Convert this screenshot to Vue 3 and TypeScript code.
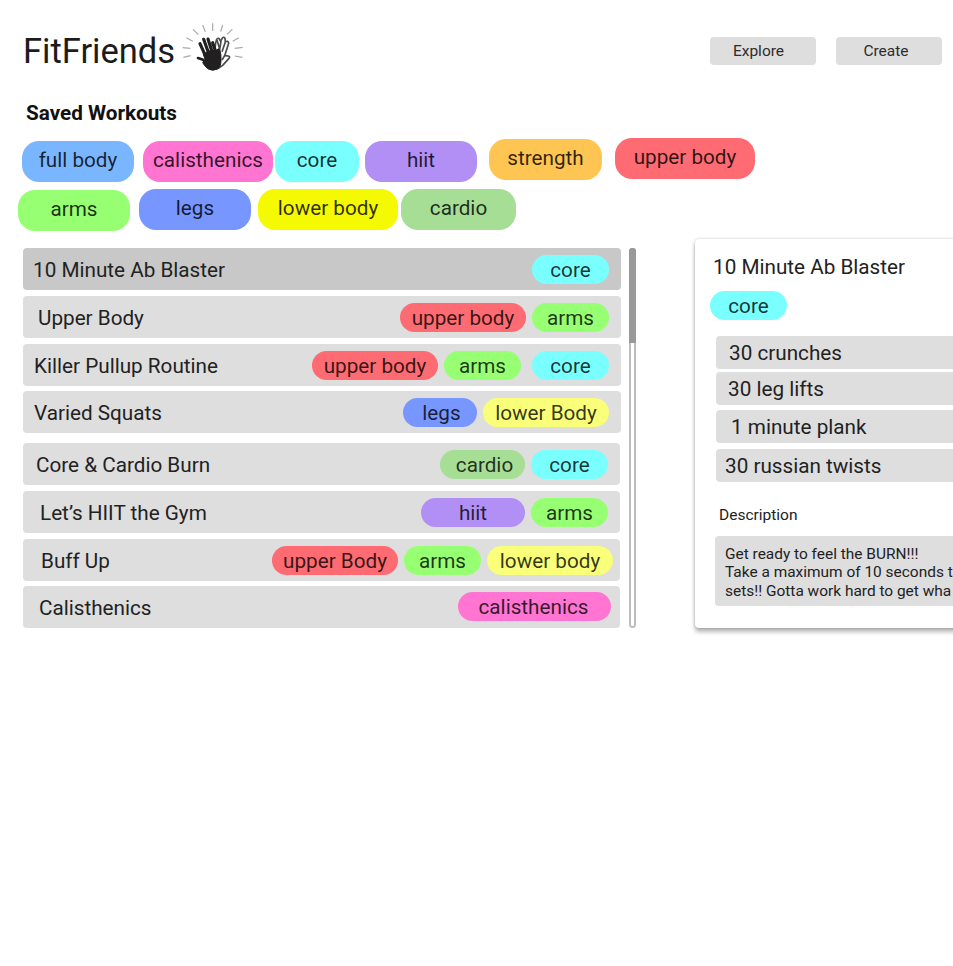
<script setup lang="ts">
interface Tag {
  label: string
  kind: string
}

interface Workout {
  name: string
  tags: Tag[]
}

const filters: Tag[][] = [
  [
    { label: 'full body', kind: 'full' },
    { label: 'calisthenics', kind: 'calisthenics' },
    { label: 'core', kind: 'core' },
    { label: 'hiit', kind: 'hiit' },
    { label: 'strength', kind: 'strength' },
    { label: 'upper body', kind: 'upper' },
  ],
  [
    { label: 'arms', kind: 'arms' },
    { label: 'legs', kind: 'legs' },
    { label: 'lower body', kind: 'lower' },
    { label: 'cardio', kind: 'cardio' },
  ],
]

const workouts: Workout[] = [
  { name: '10 Minute Ab Blaster', tags: [{ label: 'core', kind: 'core' }] },
  {
    name: 'Upper Body',
    tags: [
      { label: 'upper body', kind: 'upper' },
      { label: 'arms', kind: 'arms' },
    ],
  },
  {
    name: 'Killer Pullup Routine',
    tags: [
      { label: 'upper body', kind: 'upper' },
      { label: 'arms', kind: 'arms' },
      { label: 'core', kind: 'core' },
    ],
  },
  {
    name: 'Varied Squats',
    tags: [
      { label: 'legs', kind: 'legs' },
      { label: 'lower Body', kind: 'lower' },
    ],
  },
  {
    name: 'Core & Cardio Burn',
    tags: [
      { label: 'cardio', kind: 'cardio' },
      { label: 'core', kind: 'core' },
    ],
  },
  {
    name: 'Let’s HIIT the Gym',
    tags: [
      { label: 'hiit', kind: 'hiit' },
      { label: 'arms', kind: 'arms' },
    ],
  },
  {
    name: 'Buff Up',
    tags: [
      { label: 'upper Body', kind: 'upper' },
      { label: 'arms', kind: 'arms' },
      { label: 'lower body', kind: 'lower' },
    ],
  },
  { name: 'Calisthenics', tags: [{ label: 'calisthenics', kind: 'calisthenics' }] },
]

const selected = 0
const exercises: string[] = ['30 crunches', '30 leg lifts', '1 minute plank', '30 russian twists']
const description: string[] = [
  'Get ready to feel the BURN!!!',
  'Take a maximum of 10 seconds t',
  'sets!! Gotta work hard to get wha',
]
</script>

<template>
  <div class="page">
    <header class="header">
      <h1 class="brand">FitFriends</h1>
      <svg class="logo" viewBox="0 0 225 195" fill="none">
        <g class="rays">
          <path d="M113 25V48M83 30L91 50M143 30L137 50M54 43L70 59M172 43L156 58M34 68L53 79M192 68L173 79M23 98L46 100M203 97L179 100M25 127L47 122M202 127L179 123" />
        </g>
        <g class="back-hand">
          <path d="M122 84L125 73Q130 67 133 72L137 79L142 69Q147 64 150 70L151 80Q161 76 161 85L149 122L160 123Q167 126 162 130L143 151L130 160L118 120Z" />
          <path d="M126 75L134 102M138 79L134 104M151 81L141 110M149 122L141 135" />
        </g>
        <g class="front-hand">
          <path class="fingers" d="M75 86L91 122M86 73L102 118M99 72L113 116M113 83L124 116" />
          <path class="thumb" d="M69 129L84 134L96 148" />
          <path class="palm" d="M86 117L101 108L124 106Q130 99 134 103Q139 116 138 138Q137 157 128 162Q112 170 98 161Q90 154 83 143L90 136Z" />
        </g>
      </svg>
      <nav class="nav">
        <button class="nav-button">Explore</button>
        <button class="nav-button">Create</button>
      </nav>
    </header>

    <h2 class="heading">Saved Workouts</h2>

    <section class="filters">
      <div v-for="(line, i) in filters" :key="i" class="filter-line">
        <span v-for="tag in line" :key="tag.kind" :class="['chip', tag.kind]">{{ tag.label }}</span>
      </div>
    </section>

    <main class="content">
      <ul class="workouts">
        <li v-for="(w, i) in workouts" :key="w.name" :class="['workout', { selected: i === selected }]">
          <span class="name">{{ w.name }}</span>
          <span v-for="tag in w.tags" :key="tag.kind" :class="['tag', tag.kind]">{{ tag.label }}</span>
        </li>
      </ul>
      <div class="scrollbar"><div class="thumb-bar"></div></div>

      <aside class="card">
        <h3 class="card-title">{{ workouts[selected].name }}</h3>
        <span class="tag core">core</span>
        <ul class="exercises">
          <li v-for="e in exercises" :key="e" class="exercise">{{ e }}</li>
        </ul>
        <h4 class="card-label">Description</h4>
        <div class="description">
          <p v-for="line in description" :key="line">{{ line }}</p>
        </div>
      </aside>
    </main>
  </div>
</template>

<style>
body {
  background: #fff;
}
</style>

<style scoped>
.page {
  box-sizing: border-box;
  width: 953px;
  height: 966px;
  overflow: hidden;
  font-family: Roboto, 'Liberation Sans', sans-serif;
  font-size: 20.7px;
  line-height: 24px;
  color: #222;
  background: #fff;
}
h1, h2, h3, h4, p, ul {
  margin: 0;
  padding: 0;
  font-weight: 400;
}
ul {
  list-style: none;
}
.header {
  display: flex;
  align-items: flex-start;
  height: 101px;
  padding-left: 23px;
}
.brand {
  width: 152px;
  margin-top: 31px;
  font-size: 34.5px;
  line-height: 40px;
  white-space: nowrap;
  color: #1c1c1c;
}
.logo {
  width: 75px;
  height: 65px;
  margin-top: 15px;
}
.rays {
  stroke: #a9a9a9;
  stroke-width: 3.5;
}
.back-hand {
  fill: #fff;
  stroke: #4a4a4a;
  stroke-width: 5;
  stroke-linejoin: round;
}
.front-hand {
  stroke: #211f20;
  stroke-linecap: round;
  stroke-linejoin: round;
}
.fingers {
  stroke-width: 9.5;
}
.thumb {
  stroke-width: 8;
}
.palm {
  fill: #211f20;
  stroke-width: 3;
}
.nav {
  display: flex;
  gap: 20px;
  margin: 37px 11px 0 auto;
}
.nav-button {
  width: 106px;
  height: 28px;
  padding: 0 9px 0 0;
  border: 0;
  border-radius: 4px;
  background: #dedede;
  color: #2c2c2c;
  font: 400 15.5px/27px Roboto, sans-serif;
}
.nav-button:last-child {
  padding-right: 6px;
}
.heading {
  height: 23px;
  padding-left: 26px;
  font-size: 20.7px;
  font-weight: 700;
  color: #111;
}
.filters {
  height: 124px;
}
.filter-line {
  display: flex;
  padding: 17px 0 0 22px;
  height: 32px;
}
.filter-line:last-child {
  padding-left: 18px;
}
.chip {
  flex: none;
  box-sizing: border-box;
  width: 112px;
  height: 41px;
  padding-top: 7px;
  border-radius: 17px;
  text-align: center;
  color: rgba(0, 0, 0, 0.82);
}
.chip.calisthenics { width: 130px; margin-left: 9px; }
.chip.core { width: 84px; margin-left: 2px; }
.chip.hiit { margin-left: 6px; }
.chip.strength { margin: -2px 0 0 12px; width: 113px; }
.chip.upper { margin: -3px 0 0 13px; width: 140px; }
.chip.arms { margin-top: 0; }
.chip.legs { margin: -1px 0 0 9px; }
.chip.lower { margin: -1px 0 0 7px; width: 140px; }
.chip.cardio { margin: -1px 0 0 3px; width: 115px; }

.full { background: #7ab6ff; }
.calisthenics { background: #ff75d1; }
.core { background: #7affff; }
.hiit { background: #b18ff5; }
.strength { background: #ffc552; }
.upper { background: #ff6b72; }
.arms { background: #96ff72; }
.legs { background: #7896ff; }
.lower { background: #f9ff78; }
.chip.lower { background: #f6fa00; }
.cardio { background: #a6de96; }

.content {
  display: flex;
  align-items: flex-start;
  padding-left: 23px;
}
.workouts {
  flex: none;
  width: 598px;
}
.workout {
  display: flex;
  align-items: center;
  box-sizing: border-box;
  height: 42px;
  margin-bottom: 6px;
  padding: 2px 12px 0 10px;
  border-radius: 4px;
  background: #dedede;
}
.workout.selected { background: #c8c8c8; }
.workout:nth-child(2) { padding-left: 15px; }
.workout:nth-child(3) { padding-left: 11px; margin-bottom: 5px; }
.workout:nth-child(4) { padding-left: 11px; margin-bottom: 10px; }
.workout:nth-child(n + 5) { width: 597px; }
.workout:nth-child(5) { padding-left: 13px; }
.workout:nth-child(6) { padding-left: 17px; }
.workout:nth-child(7) { padding: 2px 7px 0 18px; margin-bottom: 5px; }
.workout:nth-child(8) { padding: 2px 9px 0 16px; margin-bottom: 0; }
.name {
  margin-right: auto;
  white-space: nowrap;
}
.tag {
  flex: none;
  display: block;
  height: 29px;
  margin-left: 6px;
  border-radius: 15px;
  line-height: 29px;
  text-align: center;
  white-space: nowrap;
  color: rgba(0, 0, 0, 0.8);
}
.workout .tag {
  margin-bottom: 2px;
  line-height: 30px;
}
.tag.core, .tag.arms { width: 77px; }
.tag.upper, .tag.lower { width: 126px; }
.tag.legs { width: 74px; text-indent: 3px; }
.tag.cardio { width: 85px; text-indent: 4px; }
.tag.hiit { width: 104px; }
.workout .tag.calisthenics { width: 153px; text-indent: -2px; margin-bottom: 4px; }
.workout:nth-child(3) .core { margin-left: 11px; }

.scrollbar {
  flex: none;
  box-sizing: border-box;
  width: 7px;
  height: 380px;
  margin-left: 8px;
  border: 2px solid #bdbdbd;
  border-radius: 4px;
  background: #fff;
}
.thumb-bar {
  width: 7px;
  height: 95px;
  margin: -2px 0 0 -2px;
  border-radius: 3px 3px 0 0;
  background: #999;
}
.card {
  flex: none;
  box-sizing: border-box;
  width: 420px;
  height: 389px;
  margin: -9px 0 0 59px;
  padding: 16px 0 0 15px;
  border-radius: 4px;
  background: #fff;
  box-shadow: 0 4px 4px rgba(0, 0, 0, 0.28), 0 0 3px rgba(0, 0, 0, 0.22);
}
.card-title {
  height: 36px;
  padding-left: 3px;
  font-size: 20.7px;
}
.card .tag { margin: 0; line-height: 30px; }
.exercises {
  padding: 16px 0 0 6px;
}
.exercise {
  height: 33px;
  padding-left: 13px;
  margin-bottom: 3px;
  border-radius: 4px;
  background: #dedede;
  line-height: 34px;
}
.exercise:nth-child(2) { padding-left: 12px; margin-bottom: 5px; }
.exercise:nth-child(3) { padding-left: 15px; margin-bottom: 6px; }
.exercise:nth-child(4) { padding-left: 9px; margin-bottom: 0; }
.card-label {
  padding: 21px 0 0 9px;
  font-size: 15.5px;
  line-height: 24px;
}
.description {
  height: 70px;
  margin: 9px 0 0 5px;
  box-sizing: border-box;
  padding: 9px 0 0 10px;
  border-radius: 4px;
  background: #dedede;
  font-size: 15.45px;
  line-height: 18.3px;
  white-space: nowrap;
}
</style>
